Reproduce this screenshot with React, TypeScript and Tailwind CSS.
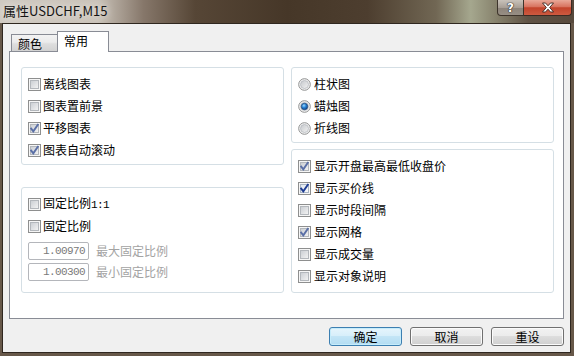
import React from "react";

function CheckBox({ checked = false, strong = false }: { checked?: boolean; strong?: boolean }) {
  return (
    <svg width="13" height="13" viewBox="0 0 13 13" className="shrink-0">
      <defs>
        <linearGradient id="cbg" x1="0" y1="0" x2="1" y2="1">
          <stop offset="0" stopColor="#c9cdd2" />
          <stop offset="1" stopColor="#f4f4f4" />
        </linearGradient>
        <linearGradient id="cbgs" x1="0" y1="0" x2="1" y2="1">
          <stop offset="0" stopColor="#dfe6ee" />
          <stop offset="1" stopColor="#fafbfc" />
        </linearGradient>
      </defs>
      <rect x="0.5" y="0.5" width="12" height="12" fill="#f6f6f6" stroke="#8e8f8f" />
      <rect x="2.5" y="2.5" width="8" height="8" fill={strong ? "url(#cbgs)" : "url(#cbg)"} stroke={strong ? "#a9b5c4" : "#b3b7bc"} />
      {checked && (
        <path
          d="M3.2 6.6 L5.3 9.3 L9.8 2.8"
          fill="none"
          stroke={strong ? "#1e3c93" : "#5a6fa6"}
          strokeWidth="1.9"
          strokeLinecap="square"
          strokeLinejoin="miter"
        />
      )}
    </svg>
  );
}

function Radio({ checked = false }: { checked?: boolean }) {
  return (
    <svg width="13" height="13" viewBox="0 0 13 13" className="shrink-0">
      <defs>
        <linearGradient id="rbg" x1="0" y1="0" x2="1" y2="1">
          <stop offset="0" stopColor="#c5c8cc" />
          <stop offset="1" stopColor="#f3f3f3" />
        </linearGradient>
        <radialGradient id="rsel" cx="0.4" cy="0.35" r="0.7">
          <stop offset="0" stopColor="#9fd8ff" />
          <stop offset="0.45" stopColor="#2a86d6" />
          <stop offset="1" stopColor="#0d3f86" />
        </radialGradient>
      </defs>
      <circle cx="6.5" cy="6.5" r="5.8" fill="#f5f5f5" stroke="#8e8f8f" />
      <circle cx="6.5" cy="6.5" r="4" fill="url(#rbg)" stroke="#b6babf" strokeWidth="0.8" />
      {checked && <circle cx="6.5" cy="6.5" r="3.2" fill="url(#rsel)" stroke="#1d4578" strokeWidth="0.7" />}
    </svg>
  );
}

function CheckRow({ label, checked, strong, gap = "gap-[2px]" }: { label: React.ReactNode; checked?: boolean; strong?: boolean; gap?: string }) {
  return (
    <div className={`h-[22px] flex items-center ${gap} text-[12px] leading-[12px] text-black`}>
      <CheckBox checked={checked} strong={strong} />
      <span>{label}</span>
    </div>
  );
}

function RadioRow({ label, checked }: { label: string; checked?: boolean }) {
  return (
    <div className="h-[22px] flex items-center gap-[3px] text-[12px] leading-[12px] text-black">
      <Radio checked={checked} />
      <span>{label}</span>
    </div>
  );
}

function NumRow({ value, label }: { value: string; label: string }) {
  return (
    <div className="flex items-center">
      <div className="w-[61px] h-[18px] border border-[#b4b6bb] rounded-[2px] bg-white flex items-center justify-end pr-[3px] font-['Liberation_Mono',monospace] text-[11px] tracking-[-0.6px] leading-[12px] text-[#7a7a7a]">
        {value}
      </div>
      <span className="ml-[7px] text-[12px] leading-[12px] text-[#a3a3a3]">{label}</span>
    </div>
  );
}

function Button({ label, primary = false }: { label: string; primary?: boolean }) {
  return (
    <div
      className={
        primary
          ? "w-[73px] h-[19px] rounded-[3px] border border-[#3c7fb1] bg-[linear-gradient(180deg,#e6f5fc_0%,#d6eefa_50%,#c3e5f6_50%,#b2dcf2_100%)] shadow-[inset_0_0_0_1px_#c6ecfb] flex items-center justify-center text-[12px] leading-[12px] text-black"
          : "w-[73px] h-[19px] rounded-[3px] border border-[#707070] bg-[linear-gradient(180deg,#f2f2f2_0%,#ebebeb_50%,#dddddd_50%,#cfcfcf_100%)] shadow-[inset_0_0_0_1px_#fbfbfb] flex items-center justify-center text-[12px] leading-[12px] text-black"
      }
    >
      {label}
    </div>
  );
}

export default function App() {
  return (
    <div className="w-[574px] h-[356px] bg-[#675849] flex flex-col overflow-hidden font-['Noto_Sans_CJK_SC','Noto_Sans',sans-serif]">
      {/* Title bar */}
      <div className="h-[23px] flex items-start bg-[linear-gradient(90deg,#cfc9c1_0%,#c9c2b8_17%,#86776a_25%,#564636_34%,#463728_50%,#4d3e2f_64%,#716754_76%,#a5a78e_82%,#8a8670_86%,#5f5244_92%,#57493c_100%)]">
        <div className="pl-[3px] pt-[2px] text-[13px] leading-[18px] text-[#141414] [text-shadow:0_0_6px_#e8e4de,0_0_10px_#e8e4de]">
          属性USDCHF,M15
        </div>
        <div className="ml-auto mr-[2px] flex">
          <div className="w-[27px] h-[16px] rounded-bl-[4px] border border-t-0 border-[#3d342b] bg-[linear-gradient(180deg,#c9c2ba_0%,#a89f96_50%,#8c837a_51%,#978e84_100%)] flex items-center justify-center">
            <span className="text-[12px] leading-[12px] font-bold text-white font-['DejaVu_Sans',sans-serif] [text-shadow:0_0_1px_#222,0_0_1px_#222,0_0_1px_#222]">?</span>
          </div>
          <div className="w-[48px] h-[16px] rounded-br-[4px] border border-t-0 border-l-0 border-[#3d2a22] bg-[linear-gradient(180deg,#e9a898_0%,#d8735f_45%,#c3432b_52%,#cd5a40_100%)] flex items-center justify-center">
            <svg width="14" height="11" viewBox="0 0 14 11">
              <path
                d="M1.5 1 H4.5 L7 3.8 L9.5 1 H12.5 L8.7 5.5 L12.5 10 H9.5 L7 7.2 L4.5 10 H1.5 L5.3 5.5 Z"
                fill="#ffffff"
                stroke="#3a2620"
                strokeWidth="0.9"
                strokeLinejoin="round"
              />
            </svg>
          </div>
        </div>
      </div>

      {/* Client area */}
      <div className="ml-[2px] w-[569px] h-[330px] border border-[#2f271f] bg-[#f0f0f0] flex flex-col px-[6px] pt-[7px]">
        {/* Tabs */}
        <div className="h-[20px] flex items-end pl-[2px] relative z-10">
          <div className="w-[46px] h-[17px] border-l border-t border-[#898c95] bg-[linear-gradient(180deg,#f3f3f3_0%,#ebebeb_45%,#dedede_55%,#d2d2d2_100%)] flex items-center pl-[6px] pt-[1px] text-[12px] leading-[12px] text-black">
            颜色
          </div>
          <div className="w-[52px] h-[21px] -mb-[1px] border-l border-t border-r border-[#898c95] bg-white flex items-start pt-[3px] pl-[6px] text-[12px] leading-[12px] text-black">
            常用
          </div>
        </div>

        {/* Panel */}
        <div className="h-[268px] border border-[#898c95] bg-white flex gap-[7px] pl-[11px] pt-[15px]">
          {/* Left column */}
          <div className="w-[263px] flex flex-col">
            <div className="h-[98px] border border-[#d5dfe5] rounded-[3px] pl-[6px] pt-[5px] flex flex-col">
              <CheckRow label="离线图表" />
              <CheckRow label="图表置前景" />
              <CheckRow label="平移图表" checked />
              <CheckRow label="图表自动滚动" checked />
            </div>
            <div className="mt-[22px] h-[106px] border border-[#d5dfe5] rounded-[3px] pl-[6px] pt-[5px] flex flex-col">
              <CheckRow
                label={
                  <>
                    固定比例
                    <span className="font-['Liberation_Mono',monospace] text-[11px] tracking-[-0.6px]">1:1</span>
                  </>
                }
              />
              <CheckRow label="固定比例" />
              <div className="mt-[5px]">
                <NumRow value="1.00970" label="最大固定比例" />
              </div>
              <div className="mt-[3px]">
                <NumRow value="1.00300" label="最小固定比例" />
              </div>
            </div>
          </div>

          {/* Right column */}
          <div className="w-[263px] flex flex-col">
            <div className="h-[76px] border border-[#d5dfe5] rounded-[3px] pl-[6px] pt-[5px] flex flex-col">
              <RadioRow label="柱状图" />
              <RadioRow label="蜡烛图" checked />
              <RadioRow label="折线图" />
            </div>
            <div className="mt-[6px] h-[144px] border border-[#d5dfe5] rounded-[3px] pl-[6px] pt-[5px] flex flex-col">
              <CheckRow label="显示开盘最高最低收盘价" checked gap="gap-[3px]" />
              <CheckRow label="显示买价线" checked strong gap="gap-[3px]" />
              <CheckRow label="显示时段间隔" gap="gap-[3px]" />
              <CheckRow label="显示网格" checked gap="gap-[3px]" />
              <CheckRow label="显示成交量" gap="gap-[3px]" />
              <CheckRow label="显示对象说明" gap="gap-[3px]" />
            </div>
          </div>
        </div>

        {/* Buttons */}
        <div className="mt-[8px] flex justify-end gap-[8px]">
          <Button label="确定" primary />
          <Button label="取消" />
          <Button label="重设" />
        </div>
      </div>
    </div>
  );
}
